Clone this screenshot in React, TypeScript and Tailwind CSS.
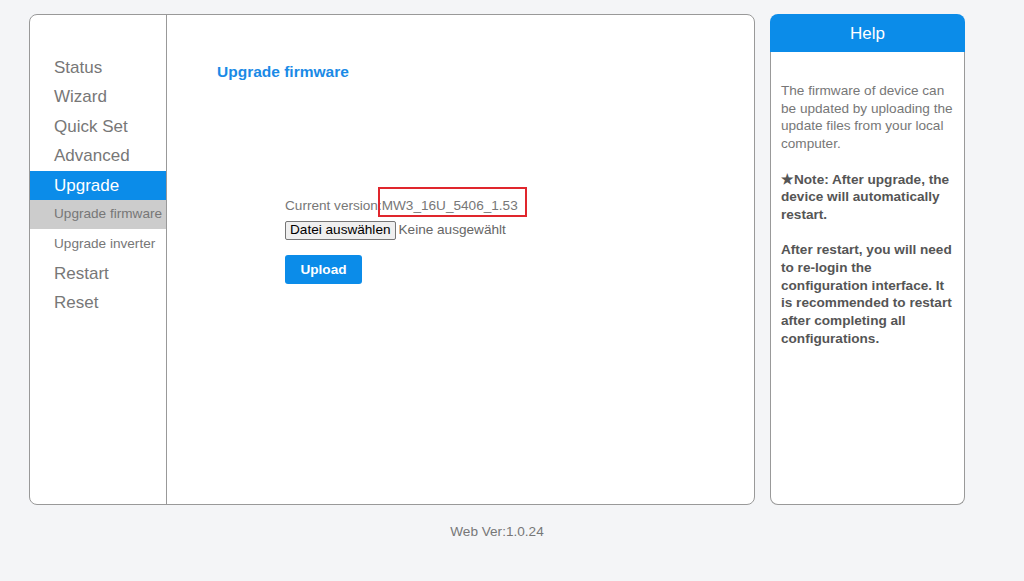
const menu = [
  { label: 'Status', sub: false },
  { label: 'Wizard', sub: false },
  { label: 'Quick Set', sub: false },
  { label: 'Advanced', sub: false },
  { label: 'Upgrade', sub: false, active: true },
  { label: 'Upgrade firmware', sub: true, active: true },
  { label: 'Upgrade inverter', sub: true },
  { label: 'Restart', sub: false },
  { label: 'Reset', sub: false },
];

function Sidebar() {
  return (
    <div className="w-[137px] shrink-0 border-r border-[#999] pt-[38px]">
      {menu.map((item) => {
        let cls = 'h-[29.4px] flex items-center pl-[24px] whitespace-nowrap ';
        if (item.sub) {
          cls += 'text-[13.6px] text-[#777] ';
          if (item.active) cls += 'bg-[#cccccc]';
        } else {
          cls += 'text-[17px] ';
          cls += item.active ? 'bg-[#0b8ce9] text-white' : 'text-[#777]';
        }
        return (
          <div key={item.label} className={cls}>
            {item.label}
          </div>
        );
      })}
    </div>
  );
}

function FirmwareForm() {
  return (
    <div className="flex-1 pl-[50px] pt-[48px]">
      <h1 className="text-[15.5px] leading-[18px] font-bold text-[#1a8ae6]">Upgrade firmware</h1>
      <div className="ml-[68px] mt-[116px] text-[13.6px] text-[#777]">
        <div className="leading-[18px]">
          Current version:
          <span className="relative">
            MW3_16U_5406_1.53
            <span className="absolute -left-[4px] -top-[11px] -right-[9px] -bottom-[4px] border-2 border-[#e0262d]" />
          </span>
        </div>
        <div className="mt-[5px] flex items-center">
          <span className="h-[19px] px-[4px] flex items-center border border-[#767676] bg-[#efefef] rounded-[2px] text-black">
            Datei auswählen
          </span>
          <span className="ml-[3px] text-[#666]">Keine ausgewählt</span>
        </div>
        <button className="mt-[15px] w-[77px] h-[29px] rounded-[3px] bg-[#0b8ce9] text-white font-bold text-[13.6px]">
          Upload
        </button>
      </div>
    </div>
  );
}

function HelpPanel() {
  return (
    <div className="w-[195px] h-[491px] ml-[15px] flex flex-col">
      <div className="h-[38px] pt-[1px] rounded-t-[8px] bg-[#0b8ce9] text-white text-[17px] flex items-center justify-center">
        Help
      </div>
      <div className="flex-1 border-x border-b border-[#999] rounded-b-[8px] bg-white pl-[10px] pr-[8px] pt-[30px] text-[13.6px] leading-[17.7px] text-[#777]">
        The firmware of device can be updated by uploading the update files from your local computer.
        <br />
        <br />
        <b className="text-[#555]">★Note: After upgrade, the device will automatically restart.</b>
        <br />
        <br />
        <b className="text-[#555]">
          After restart, you will need to re-login the configuration interface. It is recommended to restart after
          completing all configurations.
        </b>
      </div>
    </div>
  );
}

export default function App() {
  return (
    <div
      className="min-h-screen bg-[#f4f5f7] pt-[14px] pl-[29px]"
      style={{ fontFamily: '"Liberation Sans", Arial, sans-serif' }}
    >
      <div className="w-[936px]">
        <div className="flex">
          <div className="w-[726px] h-[491px] flex border border-[#999] rounded-[8px] bg-white overflow-hidden">
            <Sidebar />
            <FirmwareForm />
          </div>
          <HelpPanel />
        </div>
        <div className="mt-[18px] text-center text-[13.6px] leading-[18px] text-[#777]">Web Ver:1.0.24</div>
      </div>
    </div>
  );
}
